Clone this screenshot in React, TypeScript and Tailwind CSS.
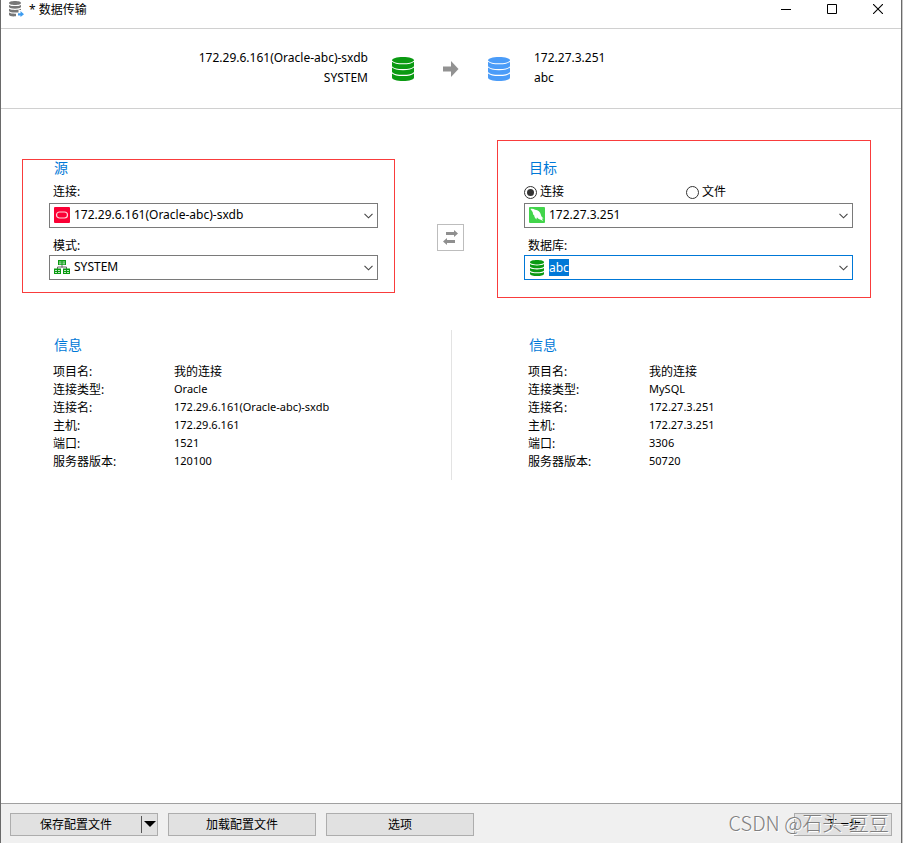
import React, { useState } from 'react';

function DatabaseIcon({ className }: { className: string }) {
  return (
    <svg viewBox="0 0 22 24" className={className} fill="currentColor" aria-hidden="true">
      <path d="M0 3.500C0 1.400 4.600 0 11 0s11 1.400 11 3.500v17c0 2.100-4.600 3.500-11 3.500S0 22.600 0 20.500z" />
      <path
        d="M0 4C1.500 5.900 6 6.800 11 6.800S20.500 5.900 22 4M0 9.800C1.500 11.700 6 12.600 11 12.600S20.500 11.700 22 9.800M0 15.600C1.500 17.500 6 18.400 11 18.400S20.500 17.500 22 15.600"
        fill="none"
        stroke="#fff"
        strokeWidth="1.100"
      />
    </svg>
  );
}

function SmallDatabaseIcon() {
  return (
    <svg viewBox="0 0 16 16" className="size-4" fill="#0a9a12" aria-hidden="true">
      <path d="M1 2.200C1 .9 4 0 8 0s7 .9 7 2.200S12 4.400 8 4.400 1 3.500 1 2.200z" />
      <path d="M1 4.100C2.500 5.100 5 5.500 8 5.500s5.500-.4 7-1.400v2.400C14.500 7.700 12 8.300 8 8.300S1.500 7.700 1 6.500z" />
      <path d="M1 8C2.500 9 5 9.400 8 9.400s5.500-.4 7-1.400v2.400c-.5 1.200-3 1.800-7 1.800s-6.500-.6-7-1.800z" />
      <path d="M1 11.900c1.500 1 4 1.400 7 1.400s5.500-.4 7-1.400v2c-.5 1.400-3 2.100-7 2.100s-6.500-.7-7-2.100z" />
    </svg>
  );
}

function TransferIcon() {
  return (
    <svg viewBox="0 0 16 16" className="size-4 shrink-0" aria-hidden="true">
      <g fill="#777">
        <path d="M1 2C1 .8 3.700 0 7 0s6 .8 6 2-2.700 2-6 2-6-.8-6-2z" />
        <path d="M1 3.900c1.300.8 3.500 1.200 6 1.200s4.700-.4 6-1.200v2.200C12.500 7.200 10 7.700 7 7.700S1.500 7.200 1 6.100z" />
        <path d="M1 7.700c1.300.8 3.500 1.200 6 1.200s4.700-.4 6-1.200v1.200h-2.500v2.500c-1 .2-2.200.2-3.500.2-3 0-5.500-.6-6-1.700z" />
        <path d="M1 11.600c1.300.8 3.500 1.200 6 1.200h1v2.500c-4 .4-6.500-.1-7-1.600z" />
      </g>
      <path d="M10 12.200h2.500V10l3.500 3.200-3.500 2.800v-1.500H10z" fill="#3d9cf0" />
    </svg>
  );
}

function OracleIcon() {
  return (
    <svg viewBox="0 0 16 16" className="size-4" aria-hidden="true">
      <rect width="16" height="16" rx="1" fill="#fb0035" />
      <rect x="2.500" y="5" width="11" height="6" rx="3" fill="none" stroke="#ffd5dc" strokeWidth="1.200" />
    </svg>
  );
}

function MySqlIcon() {
  return (
    <svg viewBox="0 0 16 16" className="size-4" aria-hidden="true">
      <rect width="16" height="16" rx="1" fill="#42d54b" />
      <path
        d="M1.500 2C3 1.500 4.800 1.900 6 2.700c3-.1 5.200 2.200 5.900 5.100.3 1.500 1 2.500 2.600 3.400l-1.600.5 1.300 2.400-3.100-1.700c-1.300 0-2.100-.8-3-1.900-.5.100-.6.900-.4 2-1.400-.9-2.300-2.300-2.500-4L4 7.200C4.300 5.200 2.600 3.900 1.500 2z"
        fill="#fff"
      />
    </svg>
  );
}

function SchemaIcon() {
  return (
    <svg viewBox="0 0 16 16" className="size-4" aria-hidden="true">
      <path d="M8 6v2.500M3.500 10V8h9v2" fill="none" stroke="#666" />
      <path d="M4 1h8v5H4zM0 9.500h7V15H0zM9 9.500h7V15H9z" fill="#0a9a12" />
      <path
        d="M5 3h2.500M8.500 3H11M5 4.800h2.500M8.500 4.800H11M1 11.500h2M4 11.500h2M1 13.500h2M4 13.500h2M10 11.500h2M13 11.500h2M10 13.500h2M13 13.500h2"
        stroke="#d5f2d7"
        strokeWidth=".9"
      />
    </svg>
  );
}

function Chevron() {
  return (
    <svg viewBox="0 0 9 6" className="h-1.5 w-[9px]" fill="none" stroke="#444" strokeWidth="1.100" aria-hidden="true">
      <path d="M.5.8l4 4 4-4" />
    </svg>
  );
}

type SelectBoxProps = { id: string; label?: string; value: string; icon: React.ReactNode };

function SelectBox({ id, label, value, icon }: SelectBoxProps) {
  return (
    <div className="relative h-[25px] border border-[#7a7a7a] bg-white">
      <span className="pointer-events-none absolute top-[3px] left-1">{icon}</span>
      <select
        id={id}
        aria-label={label}
        defaultValue={value}
        className="block h-[22px] w-full appearance-none bg-transparent pr-6 pl-6 text-xs outline-none"
      >
        <option>{value}</option>
      </select>
      <span className="pointer-events-none absolute top-[9px] right-1 flex">
        <Chevron />
      </span>
    </div>
  );
}

function Info({ rows }: { rows: string[][] }) {
  return (
    <section className="pt-[5px] pl-[31px]">
      <h2 className="pl-px text-sm leading-5 text-[#0078d7]">信息</h2>
      <dl className="mt-[7px] grid grid-cols-[121px_1fr]">
        {rows.map(([name, value]) => (
          <React.Fragment key={name}>
            <dt className="h-[18px] text-xs leading-5">{name}:</dt>
            <dd className={value === '我的连接' ? 'h-[18px] text-xs leading-5' : 'h-[18px] text-[11px] leading-[18px]'}>
              {value}
            </dd>
          </React.Fragment>
        ))}
      </dl>
    </section>
  );
}

const sourceInfo = [
  ['项目名', '我的连接'],
  ['连接类型', 'Oracle'],
  ['连接名', '172.29.6.161(Oracle-abc)-sxdb'],
  ['主机', '172.29.6.161'],
  ['端口', '1521'],
  ['服务器版本', '120100'],
];

const targetInfo = [
  ['项目名', '我的连接'],
  ['连接类型', 'MySQL'],
  ['连接名', '172.27.3.251'],
  ['主机', '172.27.3.251'],
  ['端口', '3306'],
  ['服务器版本', '50720'],
];

const radioClass =
  "grid size-[13px] appearance-none place-items-center rounded-full border border-[#333] bg-white checked:before:size-[7px] checked:before:rounded-full checked:before:bg-[#333] checked:before:content-['']";

const buttonClass = 'flex h-[23px] items-center justify-center border border-[#adadad] bg-[#e1e1e1] pt-0.5 text-xs';

export default function App() {
  const [mode, setMode] = useState('connection');
  const [database, setDatabase] = useState('abc');

  return (
    <div className="min-h-screen bg-[#c8c8c8] pr-px font-['Noto_Sans','Noto_Sans_CJK_SC',sans-serif] text-xs text-black">
      <div className="flex min-h-screen flex-col border-x border-[#6a6a6a] bg-white">
        <header className="flex h-[29px] items-start border-b border-[#d0d0d0]">
          <div className="flex h-[18px] flex-1 items-center gap-[5px] pl-[7px]">
            <TransferIcon />
            <h1 className="text-xs leading-[18px] pt-0.5">* 数据传输</h1>
          </div>
          <button aria-label="最小化" className="flex h-[18px] w-[46px] items-center justify-center">
            <svg viewBox="0 0 10 10" className="size-2.5" stroke="#000">
              <path d="M0 5.500h10" />
            </svg>
          </button>
          <button aria-label="最大化" className="flex h-[18px] w-[46px] items-center justify-center">
            <svg viewBox="0 0 10 10" className="size-2.5" fill="none" stroke="#000">
              <path d="M.5.5h9v9h-9z" />
            </svg>
          </button>
          <button aria-label="关闭" className="flex h-[18px] w-[46px] items-center justify-center">
            <svg viewBox="0 0 10 10" className="size-2.5" stroke="#000" strokeWidth="1.100">
              <path d="M0 0l10 10M10 0L0 10" />
            </svg>
          </button>
        </header>

        <div className="grid h-20 grid-cols-[1fr_auto_1fr] items-center gap-6 border-b border-[#d0d0d0] leading-5">
          <div className="pb-0.5 text-right">
            <p>172.29.6.161(Oracle-abc)-sxdb</p>
            <p>SYSTEM</p>
          </div>
          <div className="flex items-center gap-[29px]">
            <DatabaseIcon className="h-6 w-[22px] text-[#0a9a12]" />
            <svg viewBox="0 0 16 16" className="size-4" fill="#929292" aria-hidden="true">
              <path d="M0 5.500h8V0l7.500 8L8 16v-5.500H0z" />
            </svg>
            <DatabaseIcon className="h-6 w-[22px] text-[#4b9cf8]" />
          </div>
          <div className="pb-0.5">
            <p>172.27.3.251</p>
            <p>abc</p>
          </div>
        </div>

        <main className="flex-1 pr-[30px] pl-[21px]">
          <div className="grid grid-cols-[373fr_102px_374fr] items-start">
            <section className="mt-[50px] border border-[#f93c3c] pr-4 pb-3 pl-[26px]">
              <h2 className="mb-[5px] pl-[5px] text-sm leading-4 text-[#0078d7]">源</h2>
              <label htmlFor="source-connection" className="block pl-1 leading-[22px]">
                连接:
              </label>
              <SelectBox id="source-connection" value="172.29.6.161(Oracle-abc)-sxdb" icon={<OracleIcon />} />
              <label htmlFor="source-schema" className="block pt-[9px] pl-1 leading-[18px]">
                模式:
              </label>
              <SelectBox id="source-schema" value="SYSTEM" icon={<SchemaIcon />} />
            </section>

            <button
              aria-label="交换"
              className="mt-[115px] ml-[42px] flex size-[27px] items-center justify-center border border-[#bdbdbd] bg-white"
            >
              <svg viewBox="0 0 15 15" className="size-[15px]" fill="#8f8f8f">
                <path d="M3 2h8V0l4 3.500L11 7V5H3zM12 13H4v2l-4-3.500L4 8v2h8z" />
              </svg>
            </button>

            <section className="mt-[31px] border border-[#f93c3c] pt-[19px] pr-[17px] pb-[17px] pl-[26px]">
              <h2 className="mb-[5px] pl-[5px] text-sm leading-4 text-[#0078d7]">目标</h2>
              <div className="flex h-[22px] items-center">
                <label className="flex w-[162px] items-center gap-[3px]">
                  <input
                    type="radio"
                    name="target"
                    className={radioClass}
                    checked={mode === 'connection'}
                    onChange={() => setMode('connection')}
                  />
                  连接
                </label>
                <label className="flex items-center gap-[3px]">
                  <input
                    type="radio"
                    name="target"
                    className={radioClass}
                    checked={mode === 'file'}
                    onChange={() => setMode('file')}
                  />
                  文件
                </label>
              </div>
              <SelectBox id="target-connection" label="目标连接" value="172.27.3.251" icon={<MySqlIcon />} />
              <label htmlFor="target-database" className="block pt-[9px] pl-1 leading-[18px]">
                数据库:
              </label>
              <div className="flex h-[25px] items-center justify-between border border-[#0078d7] bg-white pr-1 pl-1">
                <div className="flex items-center gap-1">
                  <SmallDatabaseIcon />
                  <input
                    id="target-database"
                    value={database}
                    onChange={(e) => setDatabase(e.target.value)}
                    className="field-sizing-content h-[17px] bg-[#0078d7] text-xs leading-[17px] text-white outline-none"
                  />
                </div>
                <button aria-label="选择数据库">
                  <Chevron />
                </button>
              </div>
            </section>
          </div>

          <div className="mt-8 grid grid-cols-[373fr_102px_374fr]">
            <Info rows={sourceInfo} />
            <div className="ml-14 h-[150px] border-l border-[#e3e3e3]" />
            <Info rows={targetInfo} />
          </div>
        </main>

        <footer className="relative flex h-10 items-center gap-2.5 border-t border-[#a0a0a0] bg-[#f0f0f0] px-[9px] pt-px">
          <div className="flex h-[23px] w-[148px] items-center border border-[#adadad] bg-[#e1e1e1]">
            <button className="flex-1 pt-0.5 text-xs">保存配置文件</button>
            <button
              aria-label="更多保存选项"
              className="flex h-[17px] w-4 items-center justify-center border-l border-[#555]"
            >
              <svg viewBox="0 0 12 6" className="h-1.5 w-3" aria-hidden="true">
                <path d="M0 0h12L6 6z" />
              </svg>
            </button>
          </div>
          <button className={`${buttonClass} w-[148px]`}>加载配置文件</button>
          <button className={`${buttonClass} w-[148px]`}>选项</button>
          <button className={`${buttonClass} ml-auto w-[98px]`}>下一步</button>
          <p className="pointer-events-none absolute right-3 bottom-2 font-['Noto_Sans_CJK_SC',sans-serif] text-xl leading-6 font-light whitespace-nowrap text-[#808080] [text-shadow:1px_1px_0_#fff]">
            CSDN @石头-豆豆
          </p>
        </footer>
      </div>
    </div>
  );
}
